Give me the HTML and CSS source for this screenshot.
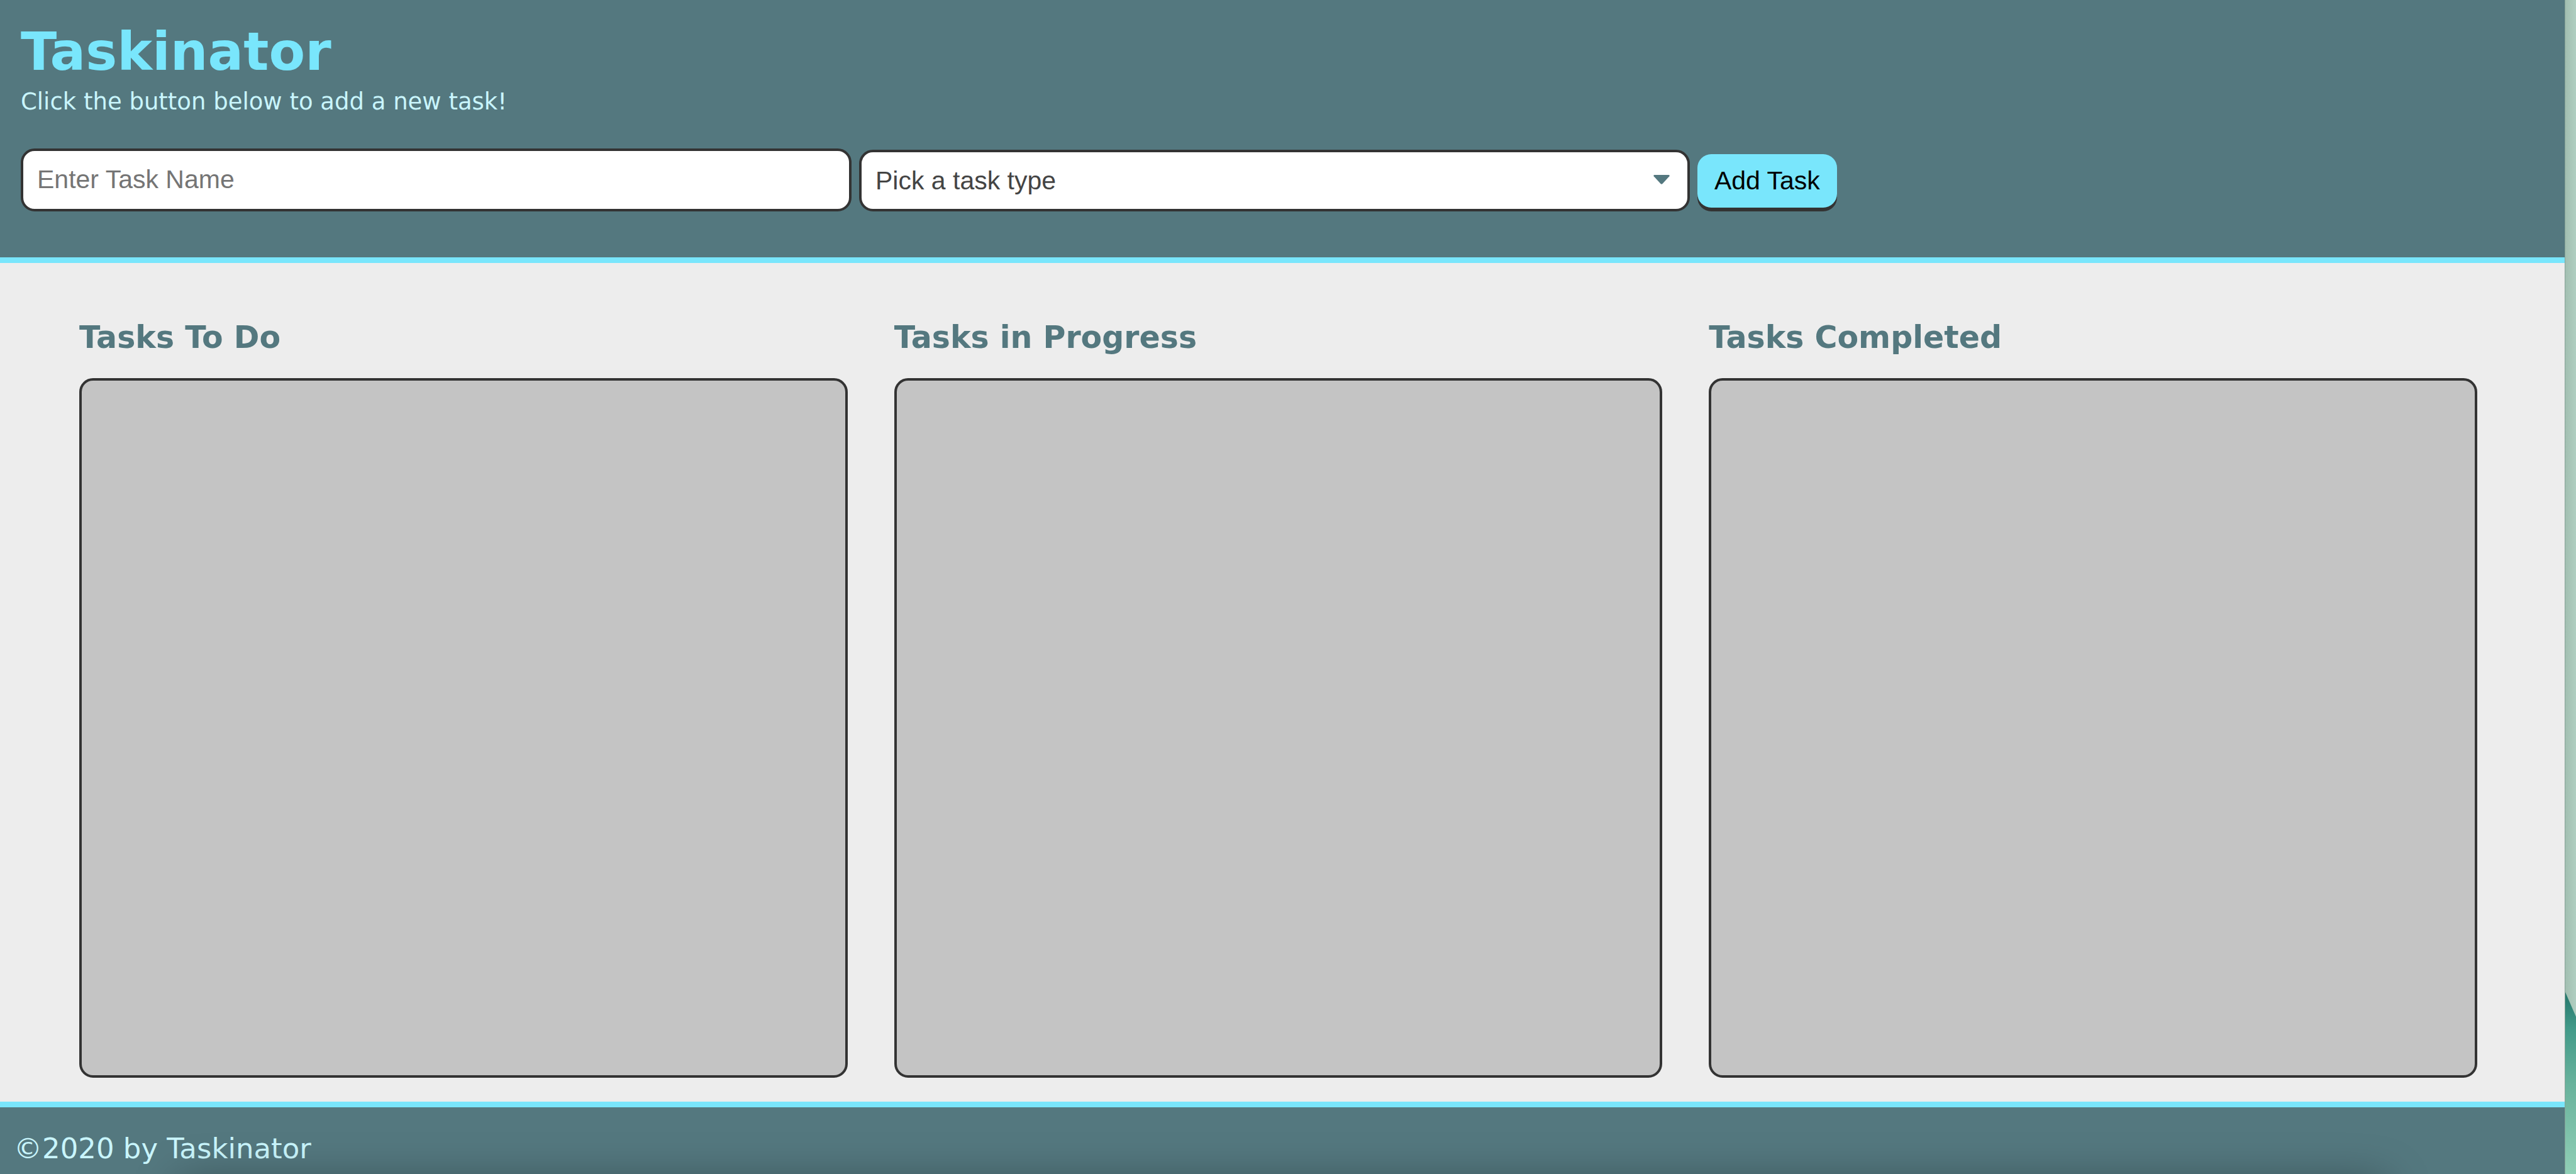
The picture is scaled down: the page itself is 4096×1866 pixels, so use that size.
FILE: index.html
```html
<!DOCTYPE html>
<html lang="en">
<head>
<meta charset="utf-8">
<title>Taskinator</title>
<link rel="stylesheet" href="styles.css">
</head>
<body>
<div class="page">
  <header class="header">
    <h1 class="title">Taskinator</h1>
    <p class="subtitle">Click the button below to add a new task!</p>
    <form class="task-form">
      <input class="field name-field" type="text" name="task-name" placeholder="Enter Task Name" aria-label="Task name">
      <div class="select-wrap">
        <select class="field type-field" name="task-type" aria-label="Task type">
          <option>Pick a task type</option>
        </select>
        <svg class="arrow" viewBox="0 0 26 15" aria-hidden="true"><path d="M1.5 0h23q2 0.5 0.8 2.2L14.5 14q-1.5 1.5-3 0L0.7 2.2Q-0.5 0.5 1.5 0z"/></svg>
      </div>
      <button class="add-button" type="button">Add Task</button>
    </form>
  </header>
  <main class="board">
    <section class="column">
      <h2 class="column-title">Tasks To Do</h2>
      <ul class="task-list"></ul>
    </section>
    <section class="column">
      <h2 class="column-title">Tasks in Progress</h2>
      <ul class="task-list"></ul>
    </section>
    <section class="column">
      <h2 class="column-title">Tasks Completed</h2>
      <ul class="task-list"></ul>
    </section>
  </main>
  <footer class="footer">
    <p class="copyright">©2020 by Taskinator</p>
    <div class="dock-shadow"></div>
  </footer>
</div>
<div class="desktop">
  <svg class="desktop-fold" viewBox="0 0 18 289" preserveAspectRatio="none" aria-hidden="true">
    <defs>
      <linearGradient id="fold" x1="0" y1="0" x2="0" y2="1">
        <stop offset="0" stop-color="#25766b"/>
        <stop offset="0.2" stop-color="#429a89"/>
        <stop offset="0.5" stop-color="#68b29c"/>
        <stop offset="1" stop-color="#90cfb6"/>
      </linearGradient>
    </defs>
    <path d="M0 0L18 39V289H0z" fill="url(#fold)"/>
  </svg>
</div>
</body>
</html>
```

FILE: styles.css
```css
* {
  box-sizing: border-box;
  margin: 0;
  padding: 0;
}

body {
  display: flex;
  min-height: 100vh;
  background: #ededed;
  font-family: Verdana, "DejaVu Sans", sans-serif;
}

.page {
  flex: 1;
  display: flex;
  flex-direction: column;
}

.header {
  padding: 30px 42px 73px 33px;
  border-bottom: 9px solid #79e6fc;
  background: #54787f;
}

.title {
  color: #79e6fc;
  font-size: 84px;
  line-height: 104px;
}

.subtitle {
  color: #c9f5fc;
  font-size: 37px;
  line-height: 56px;
}

.task-form {
  display: flex;
  align-items: flex-end;
  gap: 12px;
  margin-top: 46px;
}

.field {
  width: 100%;
  border: 4px solid #333;
  border-radius: 22px;
  background: #fff;
  font-family: Arial, "Liberation Sans", sans-serif;
  font-size: 41px;
}

.name-field {
  width: 33%;
  height: 100px;
  padding: 0 22px 2px;
}

.name-field::placeholder {
  color: #757575;
}

.select-wrap {
  position: relative;
  width: 33%;
}

.type-field {
  display: block;
  height: 98px;
  padding: 0 22px;
  appearance: none;
  color: #444;
}

.arrow {
  position: absolute;
  top: 40px;
  right: 32px;
  width: 26px;
  height: 15px;
  fill: #54787f;
}

.add-button {
  height: 85px;
  margin-bottom: 6px;
  padding: 0 27px;
  border: 0;
  border-radius: 22px;
  background: #79e6fc;
  box-shadow: 0 6px 0 #333;
  color: #000;
  font-family: Arial, "Liberation Sans", sans-serif;
  font-size: 41px;
}

.board {
  flex: 1;
  display: grid;
  grid-template-columns: repeat(3, 1fr);
  gap: 74px;
  padding: 85px 139px 38px 126px;
}

.column {
  display: flex;
  flex-direction: column;
}

.column-title {
  margin-bottom: 30px;
  color: #54787f;
  font-size: 49px;
  line-height: 68px;
}

.task-list {
  flex: 1;
  border: 4px solid #333;
  border-radius: 22px;
  background: #c4c4c4;
  list-style: none;
}

.footer {
  position: relative;
  overflow: hidden;
  padding: 32px 22px 6px;
  border-top: 9px solid #79e6fc;
  background: #54787f;
}

.copyright {
  color: #c9f5fc;
  font-size: 45px;
  line-height: 68px;
}

.dock-shadow {
  position: absolute;
  top: 100%;
  left: 7%;
  right: 7%;
  height: 100px;
  margin-top: 12px;
  box-shadow: 0 0 70px rgba(0, 0, 0, 0.35);
}

.desktop {
  display: flex;
  align-items: flex-end;
  width: 18px;
  border-left: 1px solid #86a297;
  background: linear-gradient(to right, #a2bfb1, #b0cec1);
}

.desktop-fold {
  display: block;
  width: 100%;
  height: 289px;
}
```
